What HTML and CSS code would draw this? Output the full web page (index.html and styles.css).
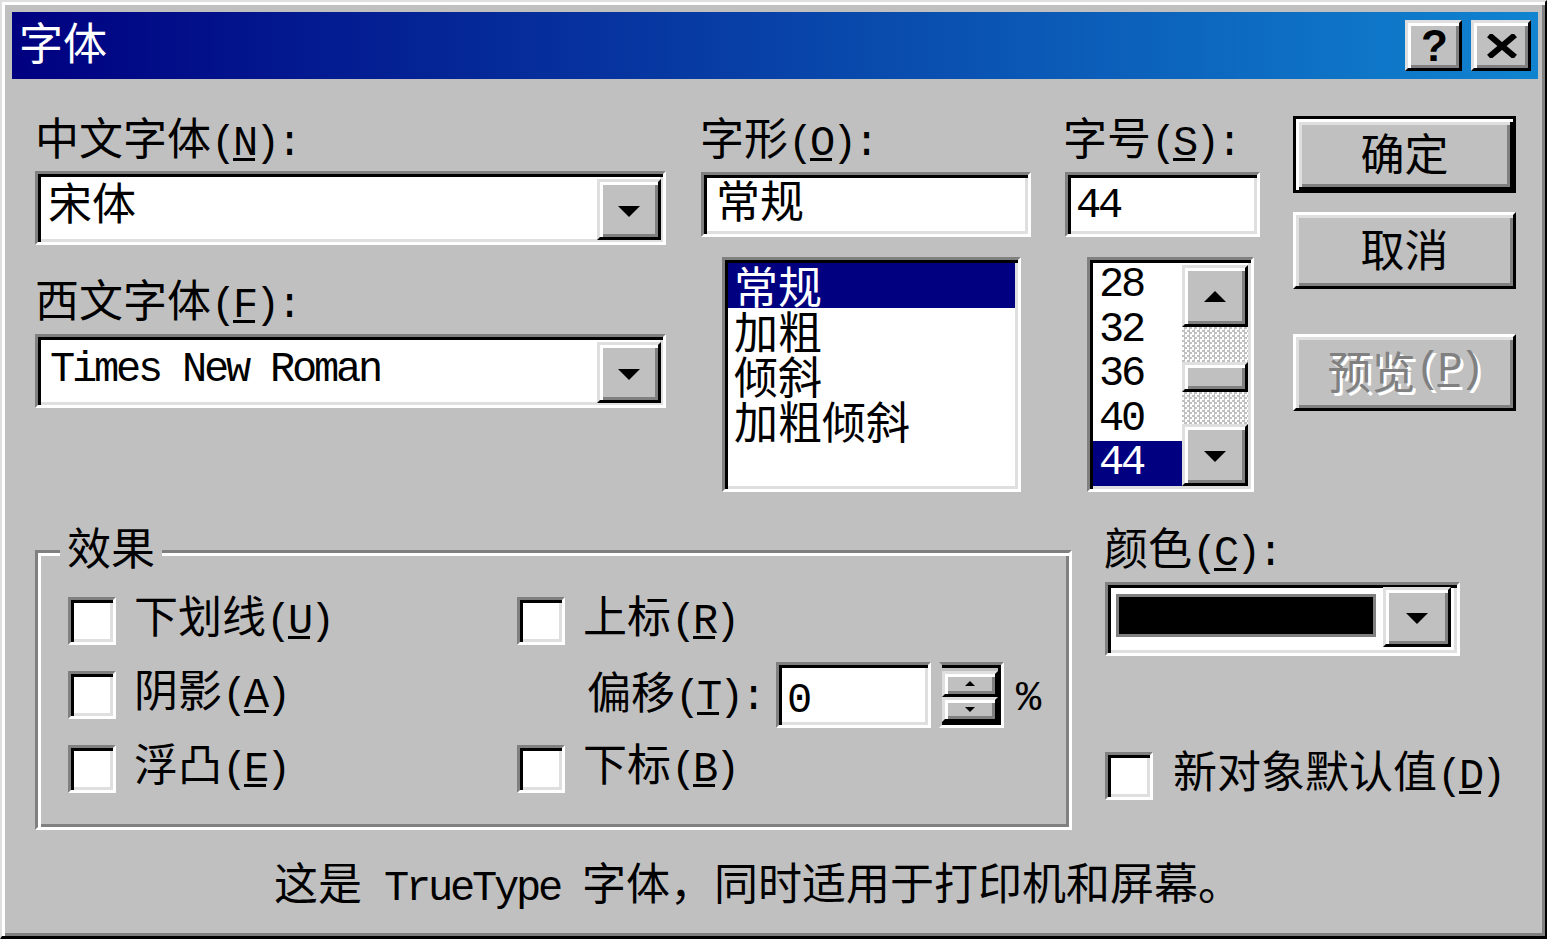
FILE: index.html
```html
<!DOCTYPE html>
<html lang="zh-CN">

<head>
    <meta charset="UTF-8">
    <meta name="viewport" content="width=device-width, initial-scale=1.0">
    <title>字体</title>
    <link rel="stylesheet" href="styles.css">
</head>

<body>
    <div class="window">
        <!-- Title bar -->
        <div class="titlebar">
            <span class="title-text">字体</span>
            <div class="title-buttons">
                <span class="title-btn help">?</span>
                <span class="title-btn close">
                    <svg width="32" height="24" viewBox="0 0 32 24">
                        <path d="M3 1 L29 23 M29 1 L3 23" stroke="#000" stroke-width="6" fill="none" />
                    </svg>
                </span>
            </div>
        </div>

        <div class="dialog-body">
            <div class="top-row">
                <!-- Font face -->
                <div class="col col-face">
                    <div class="label">中文字体<span class="en">(<u>N</u>):</span></div>
                    <div class="sunken combo">
                        <span class="combo-text">宋体</span>
                        <span class="raised-sm drop-btn"><i class="arrow-down"></i></span>
                    </div>
                    <div class="label label-second">西文字体<span class="en">(<u>F</u>):</span></div>
                    <div class="sunken combo combo-second">
                        <span class="combo-text en">Times New Roman</span>
                        <span class="raised-sm drop-btn"><i class="arrow-down"></i></span>
                    </div>
                </div>

                <!-- Font style -->
                <div class="col col-style">
                    <div class="label">字形<span class="en">(<u>O</u>):</span></div>
                    <div class="sunken text-input style-input"><span class="input-text">常规</span></div>
                    <div class="sunken listbox style-list">
                        <div class="list-items">
                            <div class="list-item selected">常规</div>
                            <div class="list-item">加粗</div>
                            <div class="list-item">倾斜</div>
                            <div class="list-item">加粗倾斜</div>
                        </div>
                    </div>
                </div>

                <!-- Font size -->
                <div class="col col-size">
                    <div class="label">字号<span class="en">(<u>S</u>):</span></div>
                    <div class="sunken text-input size-input"><span class="input-text en">44</span></div>
                    <div class="sunken listbox size-list">
                        <div class="list-items en">
                            <div class="list-item">28</div>
                            <div class="list-item">32</div>
                            <div class="list-item">36</div>
                            <div class="list-item">40</div>
                            <div class="list-item selected">44</div>
                        </div>
                        <div class="scrollbar">
                            <span class="raised-sm scroll-btn"><i class="arrow-up"></i></span>
                            <span class="track track-top"></span>
                            <span class="raised-sm thumb"></span>
                            <span class="track track-bottom"></span>
                            <span class="raised-sm scroll-btn"><i class="arrow-down"></i></span>
                        </div>
                    </div>
                </div>

                <!-- Buttons -->
                <div class="col col-buttons">
                    <div class="btn default">确定</div>
                    <div class="btn cancel">取消</div>
                    <div class="btn disabled preview">预览<span class="en">(<u>P</u>)</span></div>
                </div>
            </div>

            <div class="bottom-row">
                <!-- Effects group -->
                <div class="group">
                    <span class="group-title">效果</span>
                    <div class="effects-grid">
                        <div class="check-row">
                            <span class="check"></span>
                            <span class="check-label">下划线<span class="en">(<u>U</u>)</span></span>
                        </div>
                        <div class="check-row">
                            <span class="check"></span>
                            <span class="check-label">上标<span class="en">(<u>R</u>)</span></span>
                        </div>
                        <div class="check-row">
                            <span class="check"></span>
                            <span class="check-label">阴影<span class="en">(<u>A</u>)</span></span>
                        </div>
                        <div class="offset-row">
                            <span class="offset-label">偏移<span class="en">(<u>T</u>):</span></span>
                            <span class="sunken offset-input"><span class="en">0</span></span>
                            <span class="spinner">
                                <span class="raised-sm spin-btn"><i class="arrow-up small"></i></span>
                                <span class="raised-sm spin-btn"><i class="arrow-down small"></i></span>
                            </span>
                            <span class="percent en">%</span>
                        </div>
                        <div class="check-row">
                            <span class="check"></span>
                            <span class="check-label">浮凸<span class="en">(<u>E</u>)</span></span>
                        </div>
                        <div class="check-row">
                            <span class="check"></span>
                            <span class="check-label">下标<span class="en">(<u>B</u>)</span></span>
                        </div>
                    </div>
                </div>

                <!-- Colour -->
                <div class="color-col">
                    <div class="label">颜色<span class="en">(<u>C</u>):</span></div>
                    <div class="sunken color-combo">
                        <span class="swatch"></span>
                        <span class="raised-sm drop-btn"><i class="arrow-down"></i></span>
                    </div>
                    <div class="check-row default-row">
                        <span class="check"></span>
                        <span class="check-label">新对象默认值<span class="en">(<u>D</u>)</span></span>
                    </div>
                </div>
            </div>

            <p class="note">这是<span class="en"> TrueType </span>字体，同时适用于打印机和屏幕。</p>
        </div>
    </div>
</body>

</html>
```

FILE: styles.css
```css
* {
    box-sizing: border-box;
}

html,
body {
    margin: 0;
    padding: 0;
}

body {
    width: 1547px;
    height: 939px;
    overflow: hidden;
    background: #c0c0c0;
    font-family: "Noto Sans CJK SC", sans-serif;
    font-size: 44px;
    line-height: 48px;
    color: #000;
}

/* Latin text: half-width, like the old bitmap font */
.en {
    font-family: "Liberation Mono", monospace;
    font-size: 42px;
    letter-spacing: -3.2px;
}

.en u {
    text-underline-offset: 3px;
    text-decoration-thickness: 3px;
}

/* Window frame */
.window {
    width: 1547px;
    height: 939px;
    background: #c0c0c0;
    border-style: solid;
    border-width: 2px 2px 3px 2px;
    border-color: #dfdfdf #000 #000 #dfdfdf;
    box-shadow: inset 3px 3px #fff, inset -3px -3px #808080;
    padding: 10px 7px 0 10px;
}

.titlebar {
    height: 67px;
    display: flex;
    align-items: center;
    justify-content: space-between;
    background: linear-gradient(to right, #000080, #1084d0);
    padding: 0 7px;
    color: #fff;
}

.title-text {
    align-self: flex-start;
    margin-top: 5px;
}

.title-buttons {
    display: flex;
    gap: 9px;
}

.title-btn {
    width: 57px;
    height: 51px;
    display: flex;
    align-items: center;
    justify-content: center;
    background: #c0c0c0;
    border: 3px solid;
    border-color: #dfdfdf #000 #000 #dfdfdf;
    box-shadow: inset 3px 3px #fff, inset -3px -3px #808080;
    color: #000;
}

.title-btn.close {
    width: 60px;
}

.help {
    font-family: "Liberation Sans", sans-serif;
    font-weight: bold;
    font-size: 44px;
    padding-left: 2px;
}

.close svg {
    display: block;
    margin-left: 2px;
}

/* Bevels */
.sunken {
    background: #fff;
    border: 3px solid;
    border-color: #808080 #fff #fff #808080;
    box-shadow: inset 3px 3px #000, inset -3px -3px #dfdfdf;
}

.raised-sm {
    display: flex;
    align-items: center;
    justify-content: center;
    background: #c0c0c0;
    border: 3px solid;
    border-color: #dfdfdf #000 #000 #dfdfdf;
    box-shadow: inset 3px 3px #fff, inset -3px -3px #808080;
}

.arrow-down,
.arrow-up {
    display: block;
    width: 0;
    height: 0;
    border-left: 11px solid transparent;
    border-right: 11px solid transparent;
}

.arrow-down {
    border-top: 11px solid #000;
    margin-top: 3px;
}

.arrow-up {
    border-bottom: 11px solid #000;
}

.arrow-down.small,
.arrow-up.small {
    border-left-width: 5px;
    border-right-width: 5px;
}

.arrow-down.small {
    border-top-width: 5px;
    margin-top: 0;
}

.arrow-up.small {
    border-bottom-width: 5px;
}

/* Dialog body */
.dialog-body {
    padding-left: 23px;
}

.top-row {
    display: flex;
    align-items: flex-start;
    margin-top: 33px;
}

.label {
    height: 48px;
    white-space: nowrap;
}

.col-face {
    width: 631px;
}

.col-style {
    width: 331px;
    margin-left: 34px;
}

.col-size {
    width: 197px;
    margin-left: 32px;
}

.col-buttons {
    width: 223px;
    margin-left: 33px;
}

.combo {
    display: flex;
    height: 74px;
    margin-top: 11px;
}

.combo-second {
    margin-top: 12px;
}

.label-second {
    margin-top: 29px;
}

.combo-text {
    flex: 1;
    padding: 3px 0 0 10px;
    line-height: 48px;
    white-space: nowrap;
}

.combo-text.en {
    padding-top: 9px;
    padding-left: 12px;
}

.drop-btn {
    width: 64px;
    margin: 5px 2px 2px 0;
}

.text-input {
    height: 65px;
    margin-top: 12px;
    padding-left: 12px;
}

.input-text {
    display: block;
    line-height: 44px;
    padding-top: 2px;
}

.input-text.en {
    padding-top: 9px;
}

.size-input {
    margin-left: 2px;
    width: 195px;
    padding-left: 8px;
}

.style-input {
    margin-left: 1px;
    width: 330px;
}

.listbox {
    display: flex;
    height: 235px;
    margin-top: 20px;
    padding: 3px;
}

.style-list {
    margin-left: 22px;
    width: 299px;
}

.size-list {
    margin-left: 24px;
    width: 167px;
}

.list-items {
    flex: 1;
}

.list-item {
    height: 45px;
    line-height: 45px;
    padding-left: 6px;
    white-space: nowrap;
}

.size-list .list-item {
    height: 44.5px;
    line-height: 44.5px;
    letter-spacing: -3.2px;
}

.list-item.selected {
    background: #000080;
    color: #fff;
}

.scrollbar {
    width: 66px;
    display: flex;
    flex-direction: column;
    padding-top: 2px;
}

.scroll-btn {
    height: 62px;
}

.thumb {
    height: 30px;
}

.track {
    background: repeating-conic-gradient(#c0c0c0 0 25%, #fff 0 50%) 0 0 / 5px 5px;
}

.track-top {
    height: 35px;
}

.track-bottom {
    flex: 1;
}

/* Push buttons */
.btn {
    height: 77px;
    display: flex;
    align-items: center;
    justify-content: center;
    padding-bottom: 5px;
    background: #c0c0c0;
    border: 3px solid;
    border-color: #fff #000 #000 #fff;
    box-shadow: inset 3px 3px #dfdfdf, inset -3px -3px #808080;
}

.btn.default {
    margin-top: 4px;
    border-color: #000;
    box-shadow: inset 3px 3px #fff, inset -3px -3px #000, inset 6px 6px #dfdfdf, inset -6px -6px #808080;
}

.btn.cancel {
    margin-top: 19px;
}

.btn.preview {
    margin-top: 45px;
}

.btn.disabled {
    color: #808080;
    text-shadow: 3px 3px 0 #fff;
}

/* Bottom part */
.bottom-row {
    display: flex;
    align-items: flex-start;
    margin-top: 30px;
}

.group {
    position: relative;
    width: 1037px;
    height: 280px;
    margin-top: 28px;
    border: 3px solid;
    border-color: #808080 #fff #fff #808080;
    box-shadow: inset 3px 3px #fff, inset -3px -3px #808080;
    padding: 31px 0 0 30px;
}

.group-title {
    position: absolute;
    top: -31px;
    left: 22px;
    padding: 0 7px;
    background: #c0c0c0;
}

.effects-grid {
    display: grid;
    grid-template-columns: 449px auto;
    grid-auto-rows: 74px;
    align-items: center;
}

.check-row {
    display: flex;
    align-items: center;
}

.check {
    width: 48px;
    height: 48px;
    flex: none;
    background: #fff;
    border: 3px solid;
    border-color: #808080 #fff #fff #808080;
    box-shadow: inset 3px 3px #000, inset -3px -3px #dfdfdf;
}

.check-label {
    margin-left: 18px;
    padding-bottom: 6px;
    white-space: nowrap;
}

.offset-row {
    display: flex;
    align-items: center;
    margin-left: 70px;
}

.offset-label {
    white-space: nowrap;
    padding-bottom: 2px;
}

.offset-input {
    width: 155px;
    height: 66px;
    margin-left: 13px;
    padding-left: 8px;
    line-height: 56px;
}

.spinner {
    width: 65px;
    height: 66px;
    margin-left: 8px;
    display: flex;
    flex-direction: column;
    border: 3px solid;
    border-color: #808080 #fff #fff #c0c0c0;
    box-shadow: inset 0 3px #000, inset -3px -3px #000;
    padding: 6px 3px 3px 0;
}

.spin-btn {
    flex: 1;
}

.percent {
    margin-left: 12px;
    padding-top: 8px;
}

.color-col {
    margin-left: 32px;
}

.color-combo {
    display: flex;
    align-items: flex-start;
    width: 355px;
    height: 74px;
    margin-top: 12px;
    margin-left: 1px;
}

.swatch {
    width: 260px;
    height: 43px;
    margin: 9px 0 0 8px;
    background: #000;
    border: 3px solid #808080;
}

.color-combo .drop-btn {
    width: 68px;
    height: 60px;
    margin: 2px 0 0 7px;
}

.default-row {
    margin-top: 89px;
    margin-left: 1px;
}

.default-row .check-label {
    margin-left: 20px;
}

.note {
    margin: 27px 0 0 239px;
    white-space: nowrap;
}
```
